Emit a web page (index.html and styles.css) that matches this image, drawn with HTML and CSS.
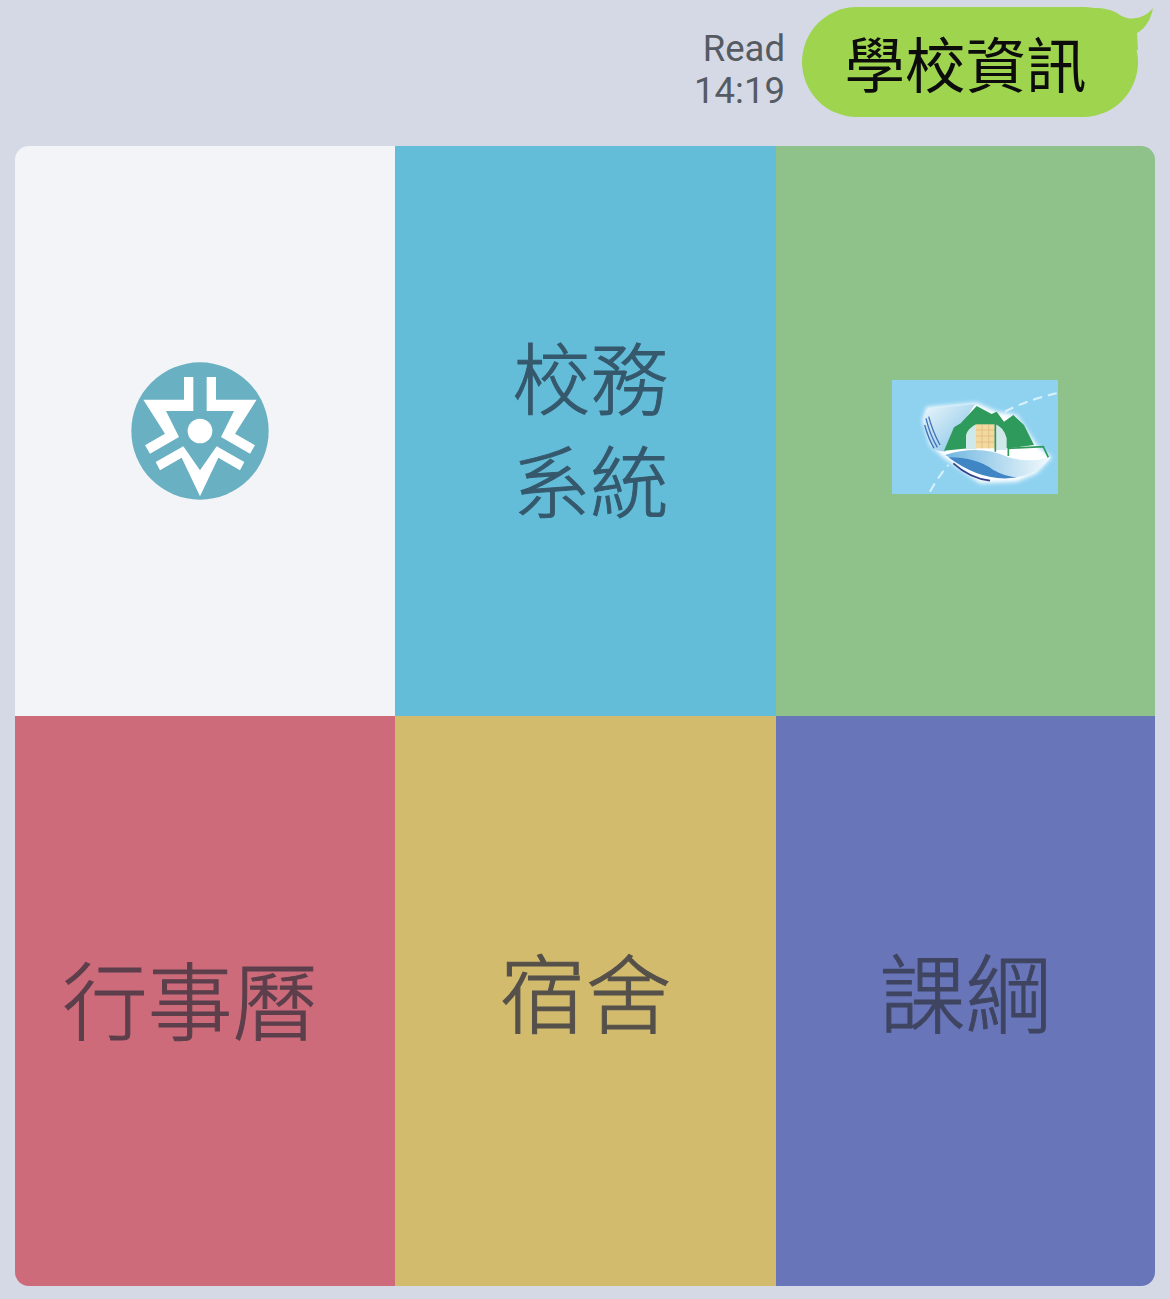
FILE: index.html
```html
<!DOCTYPE html>
<html lang="zh-Hant">
<head>
<meta charset="utf-8">
<title>學校資訊</title>
<link rel="stylesheet" href="styles.css">
</head>
<body>
<header class="message">
  <div class="meta"><span>Read</span><span>14:19</span></div>
  <div class="bubble">學校資訊
    <svg class="tail" viewBox="0 0 60 50" width="60" height="50"><path d="M0 2C10 2 18 4 23 7C27 10 30 11 33 12C42 14 53 10 59 2C57 13 52 22 43 27L44 44L20 40Z" fill="#9fd44f"/></svg>
  </div>
</header>
<main class="menu">
  <a class="cell cell-white">
    <svg class="logo-round" viewBox="60 62 420 420" width="140" height="140">
      <circle cx="270" cy="272" r="206" fill="#69b0c2"/>
      <path fill="#fff" d="M100 178H222V110H250V212H168L207 290L120 340L105 315L165 280Z"/>
      <path fill="#fff" d="M440 178H318V110H290V212H372L333 290L420 340L435 315L375 280Z"/>
      <path fill="#fff" d="M137 365L150 390L215 352L270 468L325 352L390 390L403 365L320 318L270 390L220 318Z"/>
      <circle cx="270" cy="272" r="37" fill="#fff"/>
    </svg>
  </a>
  <a class="cell cell-blue"><span class="label label-stack">校務<br>系統</span></a>
  <a class="cell cell-green">
    <svg class="logo-scene" viewBox="36 30 498 342" width="166" height="114">
      <defs>
        <filter id="soft" x="-5%" y="-5%" width="110%" height="110%"><feGaussianBlur stdDeviation="2.2"/></filter>
        <filter id="glow" x="-10%" y="-10%" width="120%" height="120%"><feGaussianBlur stdDeviation="6"/></filter>
        <linearGradient id="page" x1="0" y1="0" x2="1" y2="1">
          <stop offset="0" stop-color="#eaf6fb"/><stop offset="1" stop-color="#7fc0e6"/>
        </linearGradient>
        <linearGradient id="water" x1="0" y1="0" x2="1" y2="0">
          <stop offset="0" stop-color="#6fb6e0"/><stop offset="1" stop-color="#f2fafd"/>
        </linearGradient>
      </defs>
      <rect x="36" y="30" width="498" height="342" fill="#8fd2f0"/>
      <g filter="url(#soft)">
        <path d="M150 365Q175 320 205 285M375 125Q440 90 530 70" fill="none" stroke="#d9f1fa" stroke-width="6" stroke-dasharray="28 18"/>
        <path d="M128 150L140 112L290 98L350 125L410 135L470 225L515 262L470 310L410 335L300 340L190 262L150 225Z" fill="#fff" filter="url(#glow)"/>
        <path d="M132 150L142 116L285 102L195 245L165 240L140 190Z" fill="url(#page)"/>
        <path d="M138 145Q150 195 172 232M146 140Q158 185 180 225M134 165Q145 205 162 235" fill="none" stroke="#3f72b8" stroke-width="4"/>
        <path d="M192 242L222 172L242 160L290 108L335 132L350 125L372 155L400 135L432 165L462 225L385 235L340 232L250 236Z" fill="#2f9a5c"/>
        <path d="M258 238V195Q264 175 288 163V238ZM346 163Q372 172 380 205V240H346Z" fill="#cfe8ea"/>
        <rect x="288" y="163" width="58" height="72" fill="#f3d9a0"/>
        <path d="M288 180H346M288 198H346M288 216H346M306 163V235M326 163V235" stroke="#d9b778" stroke-width="2"/>
        <path d="M346 160V245M385 205V258M385 235L490 230L505 262" fill="none" stroke="#2f9a5c" stroke-width="5"/>
        <path d="M195 255Q300 222 385 262Q450 280 512 262Q470 318 400 322Q300 312 195 255Z" fill="url(#water)"/>
        <path d="M205 262Q290 262 340 300Q380 322 412 322Q310 340 205 262Z" fill="#3f85c4"/>
        <path d="M220 280Q270 325 330 332" fill="none" stroke="#34408c" stroke-width="5"/>
      </g>
    </svg>
  </a>
  <a class="cell cell-red"><span class="label label-wide">行事曆</span></a>
  <a class="cell cell-gold"><span class="label label-raised">宿舍</span></a>
  <a class="cell cell-indigo"><span class="label label-raised">課綱</span></a>
</main>
</body>
</html>
```
FILE: styles.css
```css
* { box-sizing: border-box; }
html, body { margin: 0; }
body {
  width: 1170px;
  height: 1299px;
  overflow: hidden;
  background: #d5d9e5;
  padding: 7px 15px 0;
  font-family: "Noto Sans CJK TC", "Noto Sans", sans-serif;
}
.message {
  display: flex;
  justify-content: flex-end;
  align-items: center;
  gap: 17px;
  padding-right: 17px;
  height: 110px;
  margin-bottom: 29px;
}
.meta {
  display: flex;
  flex-direction: column;
  align-items: flex-end;
  font-family: Roboto, "Liberation Sans", sans-serif;
  font-size: 36.5px;
  line-height: 42px;
  color: #565b63;
  padding-top: 16px;
}
.bubble {
  position: relative;
  width: 336px;
  height: 110px;
  border-radius: 55px;
  background: #9fd44f;
  color: #0c0c0c;
  font-size: 60.5px;
  line-height: 110px;
  text-align: center;
  padding-right: 9px;
  white-space: nowrap;
}
.tail { position: absolute; top: -1px; right: -16px; }
.menu {
  display: grid;
  grid-template-columns: 380px 381px 379px;
  grid-template-rows: repeat(2, 570px);
  border-radius: 14px;
  overflow: hidden;
}
.cell {
  display: flex;
  align-items: center;
  justify-content: center;
}
.cell-white { background: #f3f4f7; }
.cell-blue { background: #63bdd9; --ink: #35586c; }
.cell-green { background: #8fc18a; }
.cell-red { background: #cd6b7b; --ink: #5c3f4b; }
.cell-gold { background: #d2bb6d; --ink: #55504a; }
.cell-indigo { background: #6875b9; --ink: #3f4560; }
.label {
  font-size: 86px;
  font-weight: 300;
  -webkit-text-stroke: 1px var(--ink);
  line-height: 103px;
  color: var(--ink);
}
.label-stack { margin: 0 0 8px 10px; font-size: 78px; }
.label-wide { margin: 0 30px 10px 0; font-size: 85px; }
.label-raised { margin-bottom: 24px; }
.logo-round { margin-right: 10px; }
.logo-scene { margin: 12px 0 0 18px; }
```
